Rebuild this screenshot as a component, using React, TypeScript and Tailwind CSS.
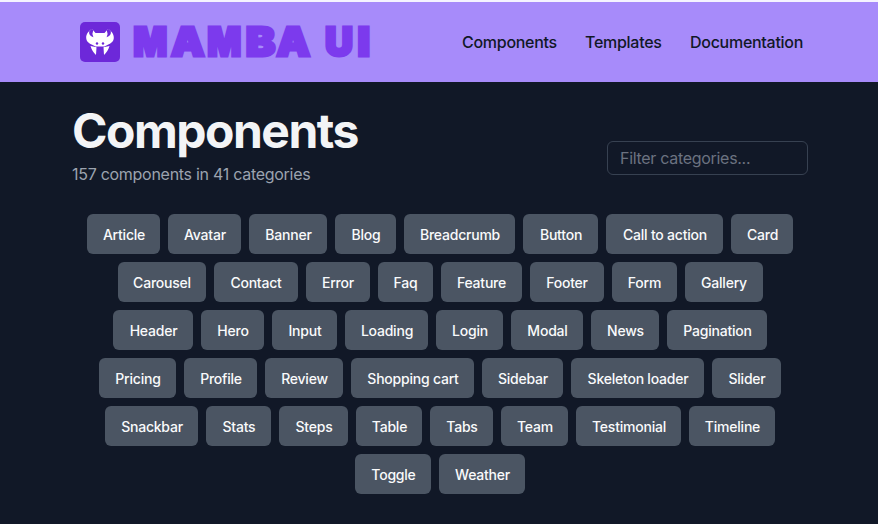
const chips: [string, string][] = [
  ['Article', 'w-[73px]'], ['Avatar', 'w-[73px]'], ['Banner', 'w-[78px]'], ['Blog', 'w-[61px]'],
  ['Breadcrumb', 'w-[111px]'], ['Button', 'w-[75px]'], ['Call to action', 'w-[117px]'], ['Card', 'w-[62px]'],
  ['Carousel', 'w-[88px]'], ['Contact', 'w-[84px]'], ['Error', 'w-[64px]'], ['Faq', 'w-[55px]'],
  ['Feature', 'w-[81px]'], ['Footer', 'w-[74px]'], ['Form', 'w-[65px]'], ['Gallery', 'w-[78px]'],
  ['Header', 'w-[80px]'], ['Hero', 'w-[63px]'], ['Input', 'w-[65px]'], ['Loading', 'w-[83px]'],
  ['Login', 'w-[67px]'], ['Modal', 'w-[72px]'], ['News', 'w-[68px]'], ['Pagination', 'w-[100px]'],
  ['Pricing', 'w-[77px]'], ['Profile', 'w-[73px]'], ['Review', 'w-[78px]'], ['Shopping cart', 'w-[123px]'],
  ['Sidebar', 'w-[81px]'], ['Skeleton loader', 'w-[133px]'], ['Slider', 'w-[69px]'],
  ['Snackbar', 'w-[93px]'], ['Stats', 'w-[65px]'], ['Steps', 'w-[69px]'], ['Table', 'w-[66px]'],
  ['Tabs', 'w-[63px]'], ['Team', 'w-[67px]'], ['Testimonial', 'w-[105px]'], ['Timeline', 'w-[86px]'],
  ['Toggle', 'w-[76px]'], ['Weather', 'w-[86px]'],
];

// letter, left edge, drawn width
const wordmark: [string, number, number][] = [
  ['M', 0.2, 34], ['A', 38, 33.5], ['M', 74.2, 34], ['B', 112.8, 29.5], ['A', 143.5, 33.5], ['U', 192, 28], ['I', 224.5, 12.5],
];

function SnakeLogo() {
  return (
    <svg viewBox="0 0 40 40" className="size-10 rounded-[5px] bg-[#6d28d9]" fill="#fff">
      <path d="M12 7C8.500 9 6 12 6.200 16c.2 3.600 3 5.600 6 6.800l3.300 1.700h9l3.300-1.700c3-1.200 5.800-3.200 6-6.800.2-4-2.300-7-5.800-9l-3.500 4h-9z" />
      <path d="M10.500 24l6 1.200L16 33c-2.700-2.400-4.300-5.300-5.500-9zM29.500 24l-6 1.200L24 33c2.700-2.400 4.300-5.300 5.500-9z" />
      <path fill="#6d28d9" d="M9.200 9.200c-.6 2.800 1 5 4.200 6l-1-3.200.8-3.400-1.200-2.100zM30.800 9.200c.6 2.800-1 5-4.200 6l1-3.200-.8-3.400 1.200-2.100z" />
      <circle cx="17" cy="21.500" r="1.200" fill="#6d28d9" />
      <circle cx="23" cy="21.500" r="1.200" fill="#6d28d9" />
    </svg>
  );
}

function Wordmark() {
  return (
    <svg
      width="238"
      height="40"
      viewBox="0 0 238 40"
      className="ml-[13px] overflow-visible fill-[#7c3aed] stroke-[#7c3aed] font-['Inter',sans-serif] text-[40px] font-black"
      strokeWidth="3"
    >
      {wordmark.map(([letter, x, width], i) => (
        <text key={i} x={x} y="34" textLength={width} lengthAdjust="spacingAndGlyphs">
          {letter}
        </text>
      ))}
    </svg>
  );
}

export default function App() {
  return (
    <div className="h-[524px] overflow-hidden bg-[#111827] font-['Inter','Liberation_Sans',sans-serif]">
      <header className="flex h-[82px] items-center border-t-2 border-[#f5f3ff] bg-[#a78bfa] pr-[74px] pb-0.5 pl-20">
        <a href="#" className="mt-0.5 flex items-center">
          <SnakeLogo />
          <Wordmark />
        </a>
        <nav className="ml-auto flex pt-0.5 text-[16px] leading-6 font-medium tracking-[-0.28px] whitespace-nowrap text-[#111827]">
          <a href="#" className="w-[123px]">Components</a>
          <a href="#" className="w-[105px]">Templates</a>
          <a href="#" className="w-[114px]">Documentation</a>
        </nav>
      </header>
      <main className="pt-[25px] pr-[66px] pl-[68px]">
        <div className="mx-1 flex items-end justify-between">
          <div className="h-[79px]">
            <h1 className="text-[48px] leading-[48px] font-bold tracking-[-1.5px] text-[#f3f4f6]">Components</h1>
            <p className="mt-[7px] text-[16px] leading-6 tracking-[-0.28px] text-[#9ca3af]">157 components in 41 categories</p>
          </div>
          <input
            type="text"
            placeholder="Filter categories..."
            className="mb-[11px] h-[34px] w-[201px] rounded-md border border-[#374151] bg-transparent px-3 text-[16px] tracking-[-0.3px] text-[#f3f4f6] placeholder:text-[#6b7280]"
          />
        </div>
        <div className="mx-1 mt-6 flex flex-wrap justify-center">
          {chips.map(([name, width]) => (
            <button
              key={name}
              className={`${width} m-1 h-10 rounded-md bg-[#4b5563] pt-0.5 pl-px text-center text-[14px] leading-5 font-medium tracking-[-0.22px] whitespace-nowrap text-[#f9fafb]`}
            >
              {name}
            </button>
          ))}
        </div>
      </main>
    </div>
  );
}
